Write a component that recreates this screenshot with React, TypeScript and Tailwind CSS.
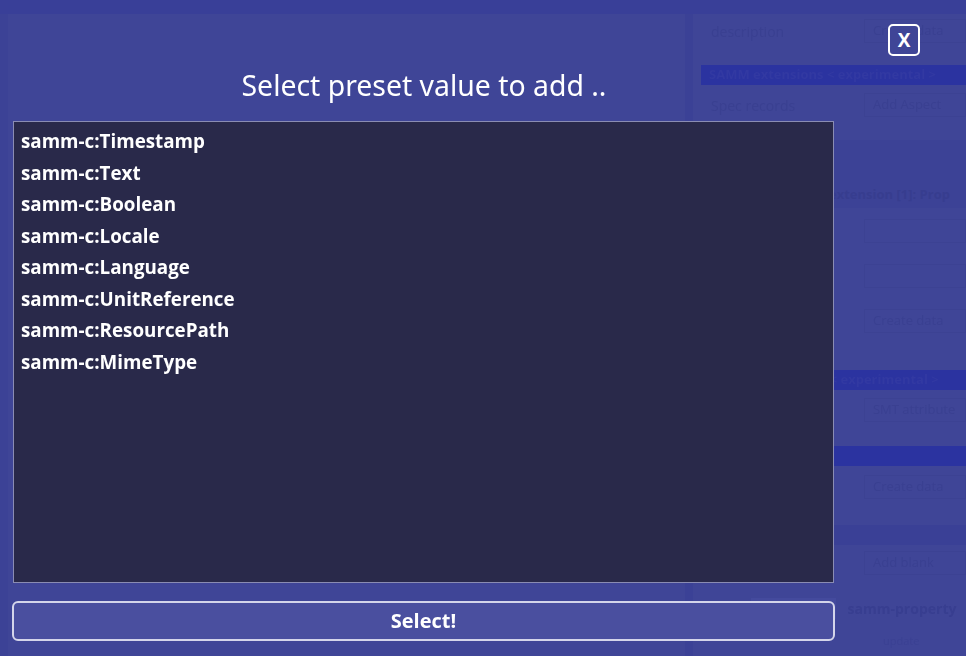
import React from "react";

const items = [
  "samm-c:Timestamp",
  "samm-c:Text",
  "samm-c:Boolean",
  "samm-c:Locale",
  "samm-c:Language",
  "samm-c:UnitReference",
  "samm-c:ResourcePath",
  "samm-c:MimeType",
];

function Row({ label, input, h }: { label: string; input?: string; h: string }) {
  return (
    <div className={"flex items-center gap-4 pl-[18px] shrink-0 " + h}>
      <div className="w-[150px] text-[14px] text-[#3a4091]">{label}</div>
      {input !== undefined && (
        <div className="h-[24px] px-2 flex items-center border border-[#3c4293] text-[13px] text-[#3a4091] w-[110px] whitespace-nowrap overflow-hidden">
          {input}
        </div>
      )}
    </div>
  );
}

function Bar({ text, dark }: { text: string; dark?: boolean }) {
  return (
    <div
      className={
        "h-[20px] shrink-0 ml-[8px] flex items-center px-2 text-[13px] font-bold whitespace-nowrap overflow-hidden " +
        (dark ? "bg-[#3a4096] text-[#363c8e]" : "bg-[#2b33a0] text-[#3239a2]")
      }
    >
      {text}
    </div>
  );
}

export default function App() {
  return (
    <div
      className="relative w-[966px] h-[656px] overflow-hidden bg-[#3f4597]"
      style={{ fontFamily: '"Open Sans", "Noto Sans", sans-serif' }}
    >
      {/* underlying page (dimmed) */}
      <div className="flex flex-col h-full blur-[0.6px]">
        <div className="h-[14px] bg-[#393f98] shrink-0" />
        <div className="flex flex-1">
          <div className="w-[8px] bg-[#3c4296]" />
          <div className="flex-1" />
          <div className="w-[8px] bg-[#3b4196]" />
          <div className="w-[273px] flex flex-col">
            <Row label="description" input="Create data" h="h-[34px]" />
            <div className="h-[17px] shrink-0" />
            <Bar text="SAMM extensions < experimental >" />
            <Row label="Spec records" input="Add Aspect" h="h-[40px]" />
            <div className="h-[15px] shrink-0" />
            <div className="bg-[#3c4296] h-[68px] shrink-0 flex items-start pl-[14px] gap-4">
              <div className="w-[62px] h-[62px] border border-[#3a4093] flex items-center justify-center text-[18px] text-[#394090]">
                P
              </div>
              <div className="mt-[45px] text-[13px] font-bold text-[#373d8f] whitespace-nowrap">SAMM extension [1]: Prop</div>
            </div>
            <Row label="" input="" h="h-[45px]" />
            <Row label="" input="" h="h-[45px]" />
            <Row label="" input="Create data" h="h-[45px]" />
            <div className="h-[27px] shrink-0" />
            <Bar text="Higher extensions < experimental >" />
            <Row label="" input="SMT attribute" h="h-[40px]" />
            <div className="h-[16px] shrink-0" />
            <Bar text="Extensions" />
            <Row label="" input="Create data" h="h-[42px]" />
            <div className="h-[17px] shrink-0" />
            <Bar text="Need extension" dark />
            <Row label="" input="Add blank" h="h-[36px]" />
            <div className="flex items-center h-[54px] shrink-0 pl-[58px] gap-3 text-[14px] font-bold text-[#383e90] whitespace-nowrap">
              <span className="bg-[#444a9d] px-2 text-[#3d4392]">Extension</span>
              <span>samm-property</span>
            </div>
            <div className="pl-[190px] text-[11px] text-[#3b4193] leading-[12px]">update</div>
          </div>
        </div>
      </div>

      {/* modal */}
      <div className="absolute inset-0">
        <div className="flex flex-col w-[824px] ml-[12px] pt-[63px]">
          <div
            className="text-center text-[28.4px] text-white leading-[44px] h-[58px]"
            style={{ fontFamily: '"Noto Sans", sans-serif' }}
          >
            Select preset value to add ..
          </div>
          <div className="ml-[1px] w-[821px] h-[462px] bg-[#29294a] border border-[#8a8cb3] pt-[4px] pl-[7px]">
            {items.map((t) => (
              <div key={t} className="text-white font-bold text-[18.8px] leading-[31.5px]">
                {t}
              </div>
            ))}
          </div>
          <button className="mt-[18px] h-[40px] w-[823px] rounded-[6px] border-2 border-[#d4d5ea] bg-[#4a4f9f] text-white font-bold text-[20px] flex items-center justify-center">
            Select!
          </button>
        </div>
        <button className="absolute left-[888px] top-[24px] w-[32px] h-[32px] rounded-[5px] border-2 border-white bg-[#3f4597] text-white font-bold text-[19px] flex items-center justify-center leading-none">
          X
        </button>
      </div>
    </div>
  );
}
